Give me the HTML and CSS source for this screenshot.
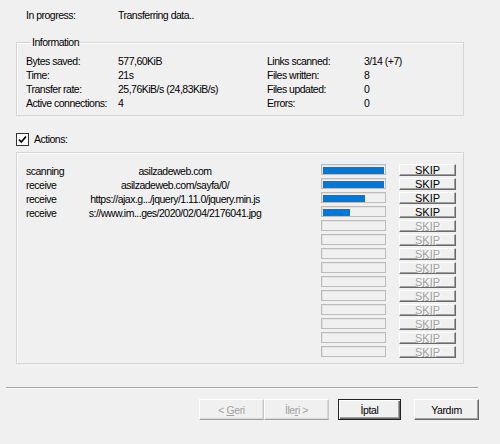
FILE: index.html
```html
<!DOCTYPE html>
<html lang="tr">
<head>
    <meta charset="UTF-8">
    <title>Transfer</title>
    <link rel="stylesheet" href="styles.css">
</head>
<body>

<div class="status">
    <span>In progress:</span>
    <span>Transferring data..</span>
</div>

<fieldset class="group">
    <legend>Information</legend>
    <div class="info">
        <span>Bytes saved:</span><span>577,60KiB</span><span>Links scanned:</span><span>3/14 (+7)</span>
        <span>Time:</span><span>21s</span><span>Files written:</span><span>8</span>
        <span>Transfer rate:</span><span>25,76KiB/s (24,83KiB/s)</span><span>Files updated:</span><span>0</span>
        <span>Active connections:</span><span>4</span><span>Errors:</span><span>0</span>
    </div>
</fieldset>

<label class="toggle">
    <span class="check">
        <svg width="9" height="9" viewBox="0 0 9 9"><path d="M1 4.5 L3.3 7 L8 1.5" fill="none" stroke="#000" stroke-width="1.8"/></svg>
    </span>
    Actions:
</label>

<div class="actions" id="actions"></div>

<div class="divider"></div>

<div class="footer">
    <div class="pair">
        <button class="btn off">&lt; <u>G</u>eri</button>
        <button class="btn off">İle<u>r</u>i &gt;</button>
    </div>
    <button class="btn main">İptal</button>
    <button class="btn">Yardım</button>
</div>

<script>
    const jobs = [
        ['scanning', 'asilzadeweb.com', 100],
        ['receive', 'asilzadeweb.com/sayfa/0/', 100],
        ['receive', 'https://ajax.g.../jquery/1.11.0/jquery.min.js', 69],
        ['receive', 's://www.im...ges/2020/02/04/2176041.jpg', 44]
    ];
    const slots = 14;
    const list = document.getElementById('actions');

    for (let i = 0; i < slots; i++) {
        const job = jobs[i];
        const row = document.createElement('div');
        row.className = 'row';
        const fill = job ? '<div class="fill" style="width:' + job[2] + '%"></div>' : '';
        row.innerHTML =
            '<span class="kind">' + (job ? job[0] : '') + '</span>' +
            '<span class="url"><span>' + (job ? job[1] : '') + '</span></span>' +
            '<div class="bar">' + fill + '</div>' +
            '<button class="skip' + (job ? '' : ' off') + '">SKIP</button>';
        list.appendChild(row);
    }
</script>

</body>
</html>
```

FILE: styles.css
```css
body {
    margin: 0;
    background-color: #f0f0f0;
    font-family: "Liberation Sans", Arial, sans-serif;
    font-size: 10.5px;
    letter-spacing: -0.5px;
    color: #000;
    width: 500px;
    height: 444px;
    overflow: hidden;
    white-space: nowrap;
}
.status {
    display: grid;
    grid-template-columns: 92px auto;
    padding: 8px 0 0 26px;
    line-height: 14px;
}
.group {
    margin: 14px 36px 0 16px;
    padding: 6px 0 5px 9px;
    border: 1px solid #d5d5d5;
    box-shadow: inset 1px 1px #fff;
}
.group legend {
    padding: 0 1px;
    margin-left: 5px;
    line-height: 12px;
}
.info {
    display: grid;
    grid-template-columns: 92px 149px 97px auto;
    line-height: 14px;
}
.toggle {
    display: flex;
    align-items: center;
    gap: 5px;
    margin: 16px 0 0 16px;
    height: 14px;
}
.check {
    width: 11px;
    height: 11px;
    border: 1px solid #333;
    background-color: #fff;
    display: flex;
    align-items: center;
    justify-content: center;
}
.actions {
    margin: 6px 36px 0 16px;
    height: 199px;
    padding: 11px 0 0 9px;
    border: 1px solid #d5d5d5;
    box-shadow: inset 1px 1px #fff;
}
.row {
    display: grid;
    grid-template-columns: 60px 178px 63px 57px;
    height: 14px;
    align-items: start;
}
.kind, .url {
    line-height: 11px;
    margin-top: 2px;
}
.url {
    display: flex;
    justify-content: center;
    overflow: hidden;
}
.bar {
    margin-left: 57px;
    width: 61px;
    border: 1px solid #bcbcbc;
    box-shadow: inset 1px 1px #e2e2e2;
    padding: 2px 1px 0 1px;
    height: 7px;
}
.fill {
    height: 7px;
    background-color: #0078d7;
}
.skip {
    margin-left: 72px;
    width: 57px;
    height: 12px;
    padding: 0;
    font-family: inherit;
    font-size: 11px;
    letter-spacing: 0;
    line-height: 9px;
    background-color: #f0f0f0;
    border: 1px solid;
    border-color: #fff #696969 #696969 #fff;
    box-shadow: inset -1px -1px #a0a0a0;
    color: #000;
}
.skip.off {
    color: #a0a0a0;
    text-shadow: 1px 1px #fff;
}
.divider {
    margin: 23px 22px 0 6px;
    border-top: 1px solid #a0a0a0;
    border-bottom: 1px solid #fff;
}
.footer {
    display: flex;
    justify-content: flex-end;
    margin: 10px 21px 0 0;
}
.pair {
    display: flex;
    margin-right: 9px;
}
.btn {
    width: 65px;
    height: 21px;
    padding: 0;
    font-family: inherit;
    font-size: 10.5px;
    letter-spacing: -0.4px;
    background-color: #f0f0f0;
    border: 1px solid;
    border-color: #fff #696969 #696969 #fff;
    box-shadow: inset -1px -1px #a0a0a0;
    color: #000;
}
.btn.off {
    color: #a0a0a0;
    border-color: #fff #c8c8c8 #a0a0a0 #fff;
    box-shadow: inset -1px -1px #dadada;
}
.btn.main {
    width: 63px;
    margin-right: 13px;
    border-color: #222;
    box-shadow: inset 1px 1px #fff, inset -1px -1px #696969, inset -2px -2px #a0a0a0;
}
```
